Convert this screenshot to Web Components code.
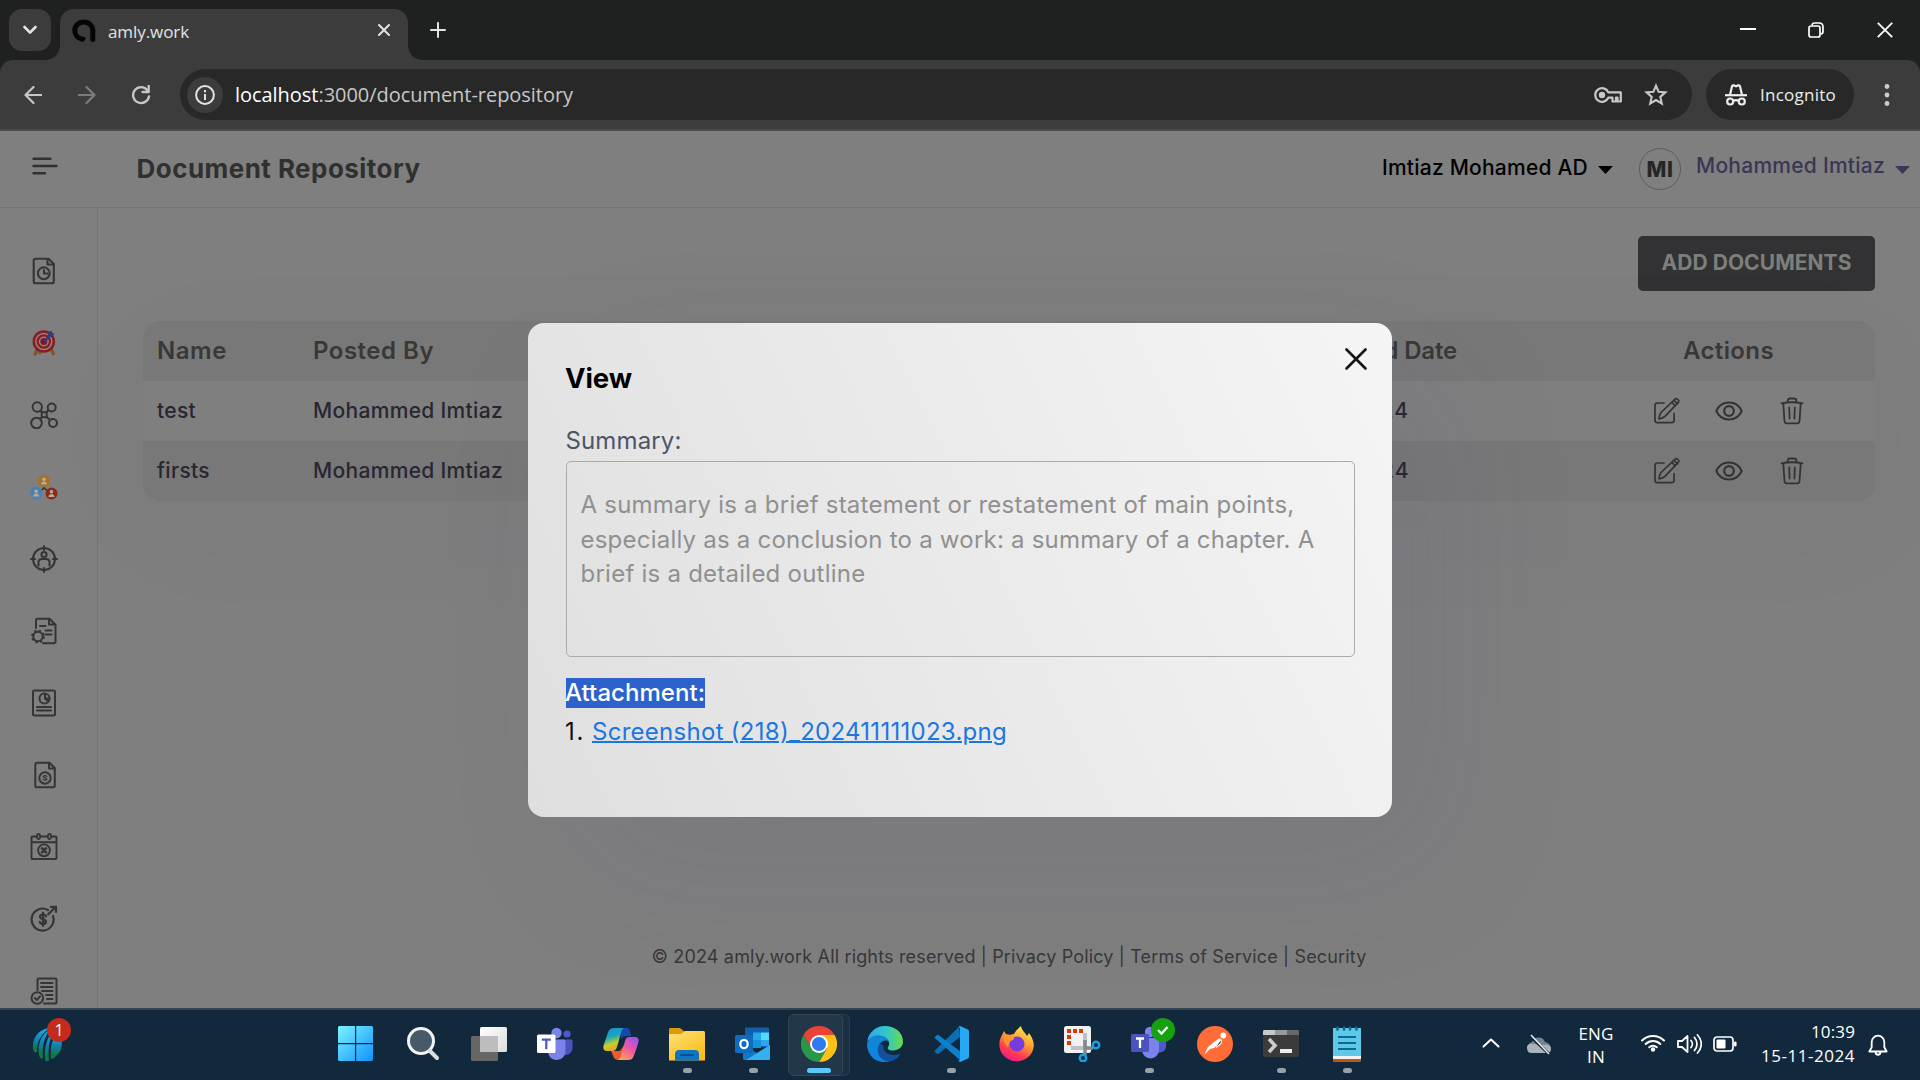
<!DOCTYPE html>
<html lang="en"><head><meta charset="utf-8"><title>amly.work</title>
<style>
html,body{margin:0;background:#7f7f7f;overflow:hidden}
body{width:1920px;height:1080px;font-family:Inter,"Liberation Sans",sans-serif}
</style></head><body>
<amly-desktop></amly-desktop>
<script>
const P='fill="none" stroke="currentColor" stroke-linecap="round" stroke-linejoin="round"';
const ICONS={
down:[14,10,`<path ${P} stroke-width="2.6" stroke-linecap="butt" d="M1.5 2l5.500 5.600L12.500 2"/>`],
logo:[24,24,`<path fill="none" stroke="#050505" stroke-width="5" stroke-linecap="round" d="M10.500 20.300C5.500 19.500 2.800 15.700 2.800 11.300 2.800 6.500 6.800 3 11.800 3S20.800 6.800 20.800 11.500V20.500"/><path stroke="#050505" stroke-width="2.500" fill="none" d="M10 19.300h3.500"/>`],
x:[12,12,`<path ${P} stroke-width="2" stroke-linecap="butt" d="M1 1l10 10M11 1L1 11"/>`],
plus:[16,16,`<path ${P} stroke-width="2" d="M8 1v14M1 8h14"/>`],
min:[16,16,`<path stroke="#fff" stroke-width="2" d="M0 7h16"/>`],
restore:[16,16,`<g fill="none" stroke="#fff" stroke-width="1.700"><rect x="1" y="4" width="11" height="11" rx="2"/><path d="M4 3C4.300 1.600 5.200 1 6.500 1H11c2.700 0 4 1.300 4 4v4.500c0 1.300-.6 2.200-2 2.500"/></g>`],
xb:[16,16,`<path stroke="#fff" stroke-width="1.800" d="M.8.8l14.400 14.400M15.200.8L.8 15.200"/>`],
back:[18,18,`<path ${P} stroke-width="2.200" stroke-linecap="butt" stroke-linejoin="miter" d="M18 9H2M9.500 1L1.500 9l8 8"/>`],
fwd:[18,18,`<path ${P} stroke-width="2.200" stroke-linecap="butt" stroke-linejoin="miter" d="M0 9h16M8.500 1l8 8-8 8"/>`],
reload:[20,20,`<path ${P} stroke-width="2.300" stroke-linecap="butt" d="M16.500 5.200A8 8 0 1 0 18 11.500"/><path ${P} stroke-width="2.300" stroke-linecap="butt" stroke-linejoin="miter" d="M17.700 .8V7H11.500"/>`],
info:[20,20,`<circle cx="10" cy="10" r="8.900" fill="none" stroke="#e3e3e3" stroke-width="2"/><path stroke="#e3e3e3" stroke-width="2" d="M10 9v6M10 5v2.200"/>`],
key:[28,16,`<path ${P} stroke-width="2.200" d="M14.300 5.300A6.800 6.800 0 1 0 14.300 10.700H18.500V14.500H22V10.700H23.500V14.500H26.800V5.300Z"/><circle cx="8" cy="8" r="3.200" fill="currentColor"/>`],
star:[24,24,`<path fill="none" stroke="currentColor" stroke-width="2.100" d="M12 2.600l2.600 6.200 6.800.6-5.100 4.500 1.500 6.600-5.800-3.500-5.800 3.500 1.500-6.600-5.100-4.500 6.800-.6z"/>`],
incog:[22,22,`<g fill="none" stroke="#eee" stroke-width="2.200"><path d="M0 11.200h22"/><path fill="none" d="M5 11L7 2.300c.2-.9.9-1.200 1.700-.9l1.300.5c.7.200 1.300.2 2 0l1.300-.5c.8-.3 1.500 0 1.700.9L17 11"/><circle cx="5.200" cy="17.500" r="3"/><circle cx="16.800" cy="17.500" r="3"/><path d="M8 16.900c2-1 4-1 6 0"/></g>`],
dots:[6,24,`<g fill="#ccc"><circle cx="3" cy="3.500" r="2.400"/><circle cx="3" cy="12" r="2.400"/><circle cx="3" cy="20.500" r="2.400"/></g>`],
menu:[26,18,`<path ${P} stroke-width="2.400" d="M1.500 1.700h17M1.500 9h23M1.500 16.300h11.500"/>`],
caret:[15,8,`<path fill="currentColor" d="M0 0h15L7.500 8z"/>`],
edit:[28,28,`<path ${P} stroke-width="1.700" d="M11 6H4.500C2.800 6 2 6.900 2 8.500V23.300C2 24.900 2.900 25.700 4.500 25.700H18.600c1.600 0 2.500-.8 2.500-2.400V16.500M6 21.800c.2-2.800.8-4.600 2-6.300L21.800 2.300c1.500-1.500 5.100.7 3.700 2.800L12.200 19.200C10.500 20.900 8.800 21.500 6 21.800zm15-18.500l3.500 3.500M19 5.500L22.300 9"/>`],
eye:[28,20,`<path ${P} stroke-width="2" d="M1.300 10C3.500 5 8 1.500 14 1.500S24.500 5 26.700 10C24.500 15 20 18.500 14 18.500S3.500 15 1.300 10z"/><circle cx="14" cy="10" r="4.800" ${P} stroke-width="2.200"/>`],
trash:[24,28,`<path ${P} stroke-width="1.800" d="M1.500 6.300c6-1.200 15-1.200 21 0M3.300 6.500l1.200 17.800c.1 1.300 1 2.100 2.300 2.100h10.400c1.300 0 2.200-.8 2.300-2.100L20.700 6.500M7.700 5.300V3.500C7.700 2.200 8.400 1.500 9.700 1.500h4.600c1.300 0 2 .7 2 2v1.800M9.200 10.500l.4 11M14.800 10.500l-.4 11"/>`],
close:[22,22,`<path ${P} stroke-width="2.600" d="M1.500 1.500l19 19M20.500 1.500l-19 19"/>`],
s1:[28,28,`<g ${P} stroke-width="2.100"><path d="M5.500 1.700h13l5.300 5.300V24.500c0 1-.8 1.800-1.800 1.800H5.500c-1 0-1.800-.8-1.800-1.800v-21c0-1 .8-1.800 1.800-1.800z"/><path d="M17.500 2v5.500h6M14 13.300v3.200h3.500"/><circle cx="13.800" cy="16.300" r="5.900"/></g>`],
s2:[28,28,`<path stroke="#7f5228" stroke-width="3" d="M8 18L4.700 26.500M20.500 18l3.300 8M10.500 20l-1 5"/><circle cx="13.800" cy="12.500" r="11.300" fill="#8b1b23"/><circle cx="13.800" cy="12.500" r="8" fill="none" stroke="#948080" stroke-width="1.500"/><circle cx="13.800" cy="12.500" r="4.300" fill="none" stroke="#948080" stroke-width="1.500"/><circle cx="13.800" cy="12.500" r="1.800" fill="#64101c"/><path stroke="#263f8c" stroke-width="2.500" d="M14 12.500l7-7"/><path fill="#263f8c" d="M18 7l1-4 3-1.500V4l2.500.5-2.500 3-4 1z"/>`],
s3:[28,28,`<g fill="none" stroke="currentColor" stroke-width="2"><circle cx="7.300" cy="6" r="4.700"/><circle cx="21.700" cy="6.500" r="4"/><circle cx="6.500" cy="22" r="5.300"/><circle cx="23" cy="22" r="4"/><rect x="11.700" y="11.200" width="5" height="5"/><path d="M10.500 9.500l2 2M18.500 9l-2.500 2.500M10 18l2.500-2.500M20 19l-3.500-3.200"/></g>`],
s4:[28,28,`<path fill="none" stroke="#333" stroke-width="1.500" d="M14 13v3M8 20l6-5 6 5"/><circle cx="14" cy="8" r="6.200" fill="#a57421"/><circle cx="6.200" cy="20" r="6.200" fill="#4d7fb0"/><circle cx="21.500" cy="20.500" r="6" fill="#8f2a16"/><g fill="#b7aaa0"><circle cx="14" cy="6.300" r="1.800"/><path d="M11 11.500c0-4 6-4 6 0z"/><circle cx="6.200" cy="18.300" r="1.800"/><path d="M3.200 23.500c0-4 6-4 6 0z"/><circle cx="21.500" cy="18.800" r="1.800"/><path d="M18.500 24c0-4 6-4 6 0z"/></g>`],
s5:[28,28,`<g ${P} stroke-width="2"><circle cx="14" cy="14" r="11"/><path d="M14 1v4M14 23v4M1 14h4M23 14h4M8.500 20.500v-3.300C8.500 15 9.700 14 12 14h4c2.300 0 3.500 1 3.500 3.200v3.300"/><circle cx="14" cy="9.500" r="2.600"/></g>`],
s6:[28,28,`<g ${P} stroke-width="2"><path d="M6 11V3.500c0-1 .7-1.700 1.700-1.700H19.500l6 6V24.500c0 1-.7 1.700-1.700 1.700H13M19 2v5.500h6M10 9h5.500M15.500 13.500h6M15.500 17.500h6"/><circle cx="8" cy="19.500" r="4.700"/></g><circle cx="8" cy="19.500" r="6" fill="none" stroke="currentColor" stroke-width="1.800" stroke-dasharray="2.360"/>`],
s7:[28,28,`<g ${P} stroke-width="2"><rect x="3" y="1.500" width="22" height="25" rx="1.500"/><path d="M7 18h14M7 21.500h14"/><circle cx="14.500" cy="9.500" r="5"/><path d="M15 4.800v4.700h4.500M15 9.500l3.300 3"/></g>`],
s8:[28,28,`<g ${P} stroke-width="2"><path d="M7 1.700h12.500l5.300 5.300V24.500c0 1-.7 1.700-1.700 1.700H7c-1 0-1.700-.7-1.700-1.700v-21C5.300 2.500 6 1.700 7 1.700zM19 2v5.500h5.500"/><circle cx="15" cy="17" r="5.700"/><path stroke-width="1.300" d="M16.800 15.300c-.8-1-3.600-.8-3.400.5.200 1.300 3.300.8 3.400 2.200.1 1.400-2.700 1.600-3.600.4"/></g>`],
s9:[28,28,`<g ${P} stroke-width="1.900"><rect x="1.500" y="3.500" width="25" height="22.500" rx="1"/><path d="M2 9.300h24"/><rect x="7" y="1" width="3" height="5" rx="1.500" fill="#7f7f7f"/><rect x="18" y="1" width="3" height="5" rx="1.500" fill="#7f7f7f"/><circle cx="14" cy="17.300" r="5.900"/><path stroke-width="2.500" d="M12 15.300l4 4M16 15.300l-4 4"/></g>`],
s10:[28,28,`<g ${P} stroke-width="2.200"><path d="M18 5A11 11 0 1 0 23 11"/><path stroke-linecap="butt" stroke-linejoin="miter" d="M17.500 10L25.500 2M20 1.800h6v6"/><path d="M16 11.500c-.7-3-6.500-2.500-6 .6.500 3 6 1.500 6 4.700 0 3-5.700 3-6.300 0M13 7.500v13.500"/></g>`],
s11:[28,28,`<g ${P} stroke-width="2"><path d="M7.500 13V2.500c0-.6.400-1 1-1h17c.6 0 1 .4 1 1V25.500c0 .6-.4 1-1 1H14M11 6h11.500M11 10h11.500M12 14h10.500M16 18h6.500M17 22h5.500"/><circle cx="7.300" cy="21" r="5.800"/><path d="M4.800 21l2 2 3.300-3.600"/></g>`],
claw:[32,36,`<defs><linearGradient id="g" x2="0" y2="1"><stop stop-color="#11b5ef"/><stop offset=".5" stop-color="#1480ad"/><stop offset=".8" stop-color="#0b7b4c"/></linearGradient></defs><g fill="url(#g)"><path d="M1 22C0 11 6 3 17 1 8 9 5 15 5 25 3 26 2 25 1 22z"/><path d="M7 28C5 17 9 8 19 1 12 11 10 18 11 31 9 32 8 31 7 28z"/><path d="M13 32C12 20 15 9 23 2 17 14 16 20 17 33 15 35 14 35 13 32z"/><path d="M19 31C18 20 20 11 26 6 32 12 31 24 24 29 21 32 20 33 19 31z"/></g>`],
win:[36,36,`<defs><linearGradient id="g" x2="1" y2="1"><stop stop-color="#7cf3ff"/><stop offset="1" stop-color="#0d93fb"/></linearGradient></defs><path fill="url(#g)" d="M0 1.500A1.500 1.500 0 0 1 1.500 0H17v17H0zM18.200 0h15.300A1.500 1.500 0 0 1 35 1.500V17H18.200zM0 18.200h17V35H1.500A1.500 1.500 0 0 1 0 33.500zM18.200 18.200H35v15.300a1.500 1.500 0 0 1-1.500 1.500H18.200z"/>`],
search:[36,36,`<circle cx="16" cy="15" r="12.500" fill="#475a69" stroke="#f3f3f3" stroke-width="3"/><path stroke="#ddd" stroke-width="4" stroke-linecap="round" d="M25 25l7 7"/>`],
task:[36,36,`<defs><linearGradient id="g" x2="1" y2="1"><stop stop-color="#fff"/><stop offset="1" stop-color="#ddd"/></linearGradient></defs><rect y="10" width="27" height="25" rx="1.500" fill="#666"/><rect x="9" y="1" width="27" height="25" rx="1.500" fill="url(#g)"/><path fill="#bdbdbd" d="M9 10h18v16H10.500A1.500 1.500 0 0 1 9 24.500z"/>`],
teams:[36,36,`<circle cx="30" cy="8" r="3.600" fill="#5059c9"/><path fill="#4b53bc" d="M24 13.500h10c1 0 1.500.6 1.500 1.500v7c0 4-3 7-7 7h-4.500z"/><circle cx="19.500" cy="7" r="5.200" fill="#7b83eb"/><path fill="#7b83eb" d="M12 13.500h14.500c1.200 0 2 .8 2 2V25c0 5-4 9-9 9s-8.500-4-8.500-9z"/><rect y="8.500" width="18.500" height="18.500" rx="1.500" fill="#fff"/><path fill="none" stroke="#5059c9" stroke-width="2.300" d="M4.800 13.700h9M9.300 13.700v9.500"/>`],
copilot:[36,36,`<defs><linearGradient id="g" x2=".3" y2="1"><stop stop-color="#1d8de8"/><stop offset=".45" stop-color="#19a7b9"/><stop offset=".75" stop-color="#c7cf2c"/><stop offset="1" stop-color="#e8a32a"/></linearGradient><linearGradient id="h" x1=".8" x2=".2" y2="1"><stop stop-color="#9b54ee"/><stop offset=".45" stop-color="#e956a5"/><stop offset="1" stop-color="#ffa35a"/></linearGradient></defs><path fill="#1747b5" d="M16 2h7c2.500 0 3.500 1.500 4 3.500l1.500 4.500h-6c-2 0-3 1-4 3z"/><path fill="#ec5b2d" d="M8 25h9l4-6-2 12c-.8 2.300-1.500 3-3.500 3-5 0-5-4-7.500-9z"/><path fill="url(#g)" d="M11 2h11c-2 0-3 1.500-3.600 3.500L14 21c-.8 2.800-2 4-4.500 4H4c-4 0-4-3.500-3.300-6L5 6.500C6.200 3.500 7.500 2 11 2z"/><path fill="url(#h)" d="M25 34H14c2 0 3-1.500 3.600-3.500L22 15c.8-2.800 2-4 4.500-4H32c4 0 4 3.500 3.300 6L31 29.500c-1.200 3-2.500 4.500-6 4.500z"/>`],
folder:[36,36,`<defs><linearGradient id="g" x2=".7" y2="1"><stop stop-color="#ffe07a"/><stop offset="1" stop-color="#fbbd16"/></linearGradient></defs><path fill="#dd9b0b" d="M0 3.500C0 2.700.700 2 1.500 2H11l5 4-4 6H0z"/><path fill="url(#g)" d="M0 8h12l4-3h18.500c.800 0 1.500.7 1.500 1.500v28H0z"/><path fill="#0f74c4" d="M6 34.500V28c0-2.500 1.500-4 4-4h16c2.500 0 4 1.500 4 4v6.500z"/><path stroke="#074c88" stroke-width="1.800" d="M11 29h14"/>`],
outlook:[36,36,`<path fill="#0f5fad" d="M10 2.500C10 2 10.500 1.500 11 1.500h22c.500 0 1 .5 1 1V21H10z"/><path fill="#28a8ea" d="M18 6.500h8V14h-8z"/><path fill="#50d9ff" d="M26 6.500h8V14h-8z"/><path fill="#1490df" d="M18 14h8v8h-8z"/><path fill="#28a8ea" d="M26 14h8v6h-8z"/><path fill="#1277c7" d="M8 19l14 8 13-8v13.500c0 .8-.7 1.500-1.500 1.500H9.500A1.500 1.500 0 0 1 8 32.500z"/><path fill="#35b0ee" d="M35 19L11 34h22.500c.8 0 1.500-.7 1.500-1.500z"/><rect y="9" width="18" height="18" rx="1.500" fill="#0f6cbd"/><ellipse cx="9" cy="18" rx="3.700" ry="4.200" fill="none" stroke="#fff" stroke-width="2.200"/>`],
chrome:[36,36,`<path fill="#ea4335" d="M18 9H33.590A18 18 0 0 0 2.410 9L10.200 22.500z"/><path fill="#fbc116" d="M33.590 9A18 18 0 0 1 18 36L25.800 22.500 18 9z"/><path fill="#279847" d="M18 36A18 18 0 0 1 2.410 9L10.200 22.500H25.800z"/><circle cx="18" cy="18" r="9" fill="#fff"/><circle cx="18" cy="18" r="7.100" fill="#3079ef"/>`],
edge:[36,36,`<defs><linearGradient id="g"><stop stop-color="#31a6ef"/><stop offset=".5" stop-color="#30c5d0"/><stop offset="1" stop-color="#65dc4b"/></linearGradient><linearGradient id="h" x2=".6" y2="1"><stop stop-color="#1387d3"/><stop offset="1" stop-color="#0d85df"/></linearGradient></defs><path fill="url(#g)" d="M.3 15C2 6 9 0 18 0c10.500 0 18 7 18 15.500C36 21 31.500 24.500 26 24.500c-4 0-6-1.500-5-3.500 1.500-2 1.500-4 .5-6C17 8 7 8 .3 15z"/><path fill="url(#h)" d="M0 18C1 12 6 9.500 11.500 9.500c5.500 0 9 2.500 10.300 6-3-2-7-1-9.300 3-3 6 1 15 10 17C10 38.500 0 30 0 18z"/><path fill="#11509c" d="M13 17.500c-5 6.500-1.500 15.500 7 18C26 36 32 32 33.500 27.500c-7 3-18 1.500-17-8z"/>`],
vscode:[36,36,`<path fill="#0b6fb8" d="M26 .8L2 24.500c-.6.600-.5 1 0 1.500l2 1.800c.5.500 1 .4 1.500 0L27 11z"/><path fill="#0d80cc" d="M2 10.700L4 9c.5-.4 1-.4 1.500 0L28 26v9L2 12.200c-.5-.5-.5-1 0-1.500z"/><path fill="#27a8f2" d="M26 .5c.5-.5 1.200-.5 1.800-.2l7 3.300c.8.400 1.200 1 1.200 1.900v25c0 .9-.4 1.500-1.200 1.900l-7 3.300c-.6.300-1.300.3-1.800-.2L25 34.500c1 .4 2 0 2-1.500V3c0-1.500-1-2-2-1.500z"/>`],
firefox:[36,36,`<defs><linearGradient id="g" x1=".8" x2=".3" y2="1"><stop stop-color="#fff14f"/><stop offset=".4" stop-color="#ffa531"/><stop offset=".75" stop-color="#ff3b4e"/><stop offset="1" stop-color="#ee1894"/></linearGradient></defs><path fill="url(#g)" d="M5 5c1.500 3 3 4 5 4l5-1C17 4 20 2 22 0c1 5 4 6 6 10l2-3c6 8 6 15 2 21-7 9-20 10-28 1C0 24-1 16 2.500 10z"/><circle cx="18" cy="18" r="7.500" fill="#743be0"/><path fill="#ff9530" d="M5 9c5-1 7 0 10 2 1 2-2 4-4 4 0 2-2 3-2 6C5 17 4 13 5 9z"/>`],
snip:[38,36,`<rect width="27" height="27" rx="2.500" fill="#f0f1f2"/><path fill="#bdc1c5" d="M7 20h12V7h4v17H7z"/><path fill="none" stroke="#d83b01" stroke-width="4" stroke-dasharray="4 2" d="M3 5h16"/><path fill="none" stroke="#d83b01" stroke-width="4" stroke-dasharray="4 2" d="M5 9v10"/><path stroke="#84898e" stroke-width="3.500" d="M21 14v15M20 22h9"/><g fill="none" stroke="#1b9de2" stroke-width="2.500"><circle cx="32" cy="19" r="3.200"/><circle cx="19" cy="32" r="3.200"/></g>`],
teams2:[46,44,`<circle cx="19" cy="14" r="5.200" fill="#7b83eb"/><path fill="#5059c9" d="M24 20h11v8.500a6 6 0 0 1-6 6h-5z"/><path fill="#7b83eb" d="M12 20h16v12a8.500 8.500 0 0 1-17 0z"/><rect y="16" width="18" height="18" rx="1.500" fill="#4b53bc"/><path fill="none" stroke="#fff" stroke-width="2.300" d="M5 20.500h8M9 20.500V30"/><circle cx="32" cy="12" r="12" fill="#16a10f"/><path fill="none" stroke="#fff" stroke-width="2.300" d="M27 12l3.500 3.500 6-6.500"/>`],
postman:[36,36,`<circle cx="18" cy="18" r="18" fill="#ff6c37"/><circle cx="26.300" cy="9.500" r="2.900" fill="#fff"/><path fill="#fff" d="M22.500 12l2.500 2.500-8 7.500-4 1-5.500 5.500 3-7 4-3.500z"/><path stroke="#fff" stroke-width="1.200" d="M24.500 13.500l-.5 4-5 4"/>`],
term:[36,36,`<rect y="4" width="36" height="27" rx="1.500" fill="#3b3b3b"/><path fill="#c8c8c8" d="M0 9V5.500C0 4.700.700 4 1.500 4H12v5z"/><path fill="#999" d="M12 4h12v5H12z"/><path fill="#686868" d="M24 4h10.500c.8 0 1.500.7 1.500 1.500V9H24z"/><path fill="none" stroke="#ccc" stroke-width="3.600" d="M6 13l6 6.500L6 26"/><rect x="17" y="23" width="12" height="4" fill="#eee"/>`],
note:[28,36,`<path fill="#60c8e7" d="M0 2h28v28H0z"/><path fill="#f2f2f2" d="M0 30h28v3H0z"/><path fill="#b8590f" d="M0 33h28v1.500c0 1-.5 1.500-1.500 1.500h-25C.5 36 0 35.500 0 34.500z"/><path stroke="#0c6894" stroke-width="2" d="M5 11h18M5 17h18M5 23h18"/><path stroke="#0c6894" stroke-width="2.600" stroke-linecap="round" d="M4.500 1.500v2M11 1.500v2M17 1.500v2M23.500 1.500v2"/>`],
up:[18,10,`<path ${P} stroke-width="2" d="M1.500 8.500L9 1.500l7.500 7"/>`],
cloud:[24,22,`<path fill="#738490" d="M5 8a7 7 0 0 1 13 0c4 1 6 4 6 6l-9-2-12 4C-1 13 1 9 5 8z"/><path fill="#a9b3bb" d="M0 13c0-2 3-4 6-3l12 1c3-1 6 1 6 4s-2 4-4 4H4c-3 0-4-3-4-6z"/><path stroke="#12283c" stroke-width="3" d="M2 1l20 19"/><path stroke="#eee" stroke-width="1.500" d="M4 1l18 19"/>`],
wifi:[24,18,`<g ${P} stroke-width="2"><path d="M1 6.500a15.500 15.500 0 0 1 22 0M4.700 10a10.300 10.300 0 0 1 14.600 0M8.300 13.300a5.200 5.200 0 0 1 7.400 0"/></g><circle cx="12" cy="15.500" r="2.200" fill="currentColor"/>`],
vol:[25,20,`<path ${P} stroke-width="1.800" d="M1 7h4l5.500-5v16L5 13H1zM14 6.500c1.800 2 1.800 5 0 7M17.500 3.500c3.300 3.800 3.300 9.200 0 13M20.500 1c5 5.500 5 12.500 0 18"/>`],
bat:[24,16,`<rect x="1" y="1" width="19" height="14" rx="3" fill="none" stroke="#fff" stroke-width="1.700"/><rect x="3.500" y="3.500" width="9" height="9" rx="1" fill="#fff"/><path stroke="#fff" stroke-width="2.500" stroke-linecap="round" d="M22.300 6.800v2.400"/>`],
bell:[20,24,`<path ${P} stroke-width="1.800" d="M1.300 18.500l2.400-4.200V9a6.300 6.300 0 0 1 12.600 0v5.300l2.400 4.200zM7.500 19.500c.5 3 4.500 3 5 0"/>`]
};
const def=(n,css,html)=>{const t=document.createElement('template');t.innerHTML=`<style>*{box-sizing:border-box}:host{display:block;box-sizing:border-box}${css}</style>${html}`;
customElements.define(n,class extends HTMLElement{connectedCallback(){if(this.shadowRoot)return;this.attachShadow({mode:'open'}).append(t.content.cloneNode(true))}})};

customElements.define('app-icon',class extends HTMLElement{connectedCallback(){if(this.shadowRoot)return;
 const [w,h,b]=ICONS[this.getAttribute('name')];
 this.attachShadow({mode:'open'}).innerHTML=`<style>:host{display:block;flex:none;width:${w}px;height:${h}px}svg{display:block}</style><svg width="${w}" height="${h}" viewBox="0 0 ${w} ${h}">${b}</svg>`}});

/* One line of text whose tracking is set so that it fills the width given in "w". */
customElements.define('fit-text',class extends HTMLElement{connectedCallback(){if(this.shadowRoot)return;
 this.attachShadow({mode:'open'}).innerHTML=`<style>:host{display:block;flex:none;white-space:nowrap}span{display:inline-block}:host([link]) span{text-decoration:underline;text-decoration-thickness:1.6px}</style><span><slot></slot></span>`;
 const s=this.shadowRoot.querySelector('span'),w=+this.getAttribute('w');
 requestAnimationFrame(()=>this.fit(s,w));this.fit(s,w)}
 fit(s,w){s.style.letterSpacing='0';const n=s.getBoundingClientRect().width;if(!n||!w)return;const c=this.textContent.length;s.style.letterSpacing=((w-n)/c).toFixed(3)+'px';}});

def('browser-tabs',`:host{height:60px;background:#1f2120;display:flex;align-items:flex-start;font-family:"Open Sans","Noto Sans",sans-serif;color:#e3e3e3}
.b{width:42px;height:42px;margin:9px 9px 0;border-radius:13px;background:#3c3c3c;display:grid;place-items:center}
.tab{position:relative;width:348px;height:51px;margin-top:9px;background:#3c3c3c;border-radius:14px 14px 0 0;display:flex;align-items:center;padding:0 18px 8px 12px}
.tab:before,.tab:after{content:"";position:absolute;bottom:0;width:14px;height:14px;background:radial-gradient(circle at 0 0,transparent 13.500px,#3c3c3c 14px)}
.tab:before{left:-14px}.tab:after{right:-14px;background:radial-gradient(circle at 100% 0,transparent 13.500px,#3c3c3c 14px)}
fit-text{font-size:17px;line-height:26px;margin:2px 0 0 12px}.tab app-icon:last-child{margin:-2px 0 0 auto}
.p{margin:22px 0 0 22px}.w{margin:22px 27px 0 auto;display:flex;gap:53px}`,
`<div class="b"><app-icon name="down"></app-icon></div><div class="tab"><app-icon name="logo"></app-icon><fit-text w="81">amly.work</fit-text><app-icon name="x"></app-icon></div><app-icon class="p" name="plus"></app-icon><div class="w"><app-icon name="min" style="margin-right:-1px"></app-icon><app-icon name="restore"></app-icon><app-icon name="xb"></app-icon></div>`);

def('browser-toolbar',`:host{height:71px;background:#1f2120;font-family:"Open Sans","Noto Sans",sans-serif;color:#c7c7c7}
.t{height:71px;background:#3c3c3c;border-radius:13px 13px 0 0;border-bottom:2px solid #494949;display:flex;align-items:center;padding-left:24px}
.url{width:1512px;height:51px;border-radius:26px;background:#282828;margin-left:29px;display:flex;align-items:center;padding:0 24px 0 7px}
.i{width:36px;height:36px;border-radius:50%;background:#3c3c3c;display:grid;place-items:center;margin-right:12px}
.url fit-text{font-size:20px;line-height:30px}.k{margin-left:auto}.s{margin-left:22px}
.inc{width:148px;height:51px;border-radius:26px;background:#282828;margin-left:14px;padding-left:19px;display:flex;align-items:center;gap:13px;color:#eee;font-size:17px}
.d{margin-left:30px}`,
`<div class="t"><app-icon name="back"></app-icon><app-icon name="fwd" style="margin-left:36px;color:#7b7b7b"></app-icon><app-icon name="reload" style="margin-left:35px"></app-icon><div class="url"><div class="i"><app-icon name="info"></app-icon></div><fit-text w="338"><span style="color:#fff">localhost</span>:3000/document-repository</fit-text><app-icon class="k" name="key"></app-icon><app-icon class="s" name="star"></app-icon></div><div class="inc"><app-icon name="incog"></app-icon><fit-text w="76">Incognito</fit-text></div><app-icon class="d" name="dots"></app-icon></div>`);

def('app-header',`:host{height:77px;flex:none;border-bottom:1px solid #737373;display:flex;align-items:flex-start;color:#303030}
.m{margin:26px 0 0 32px}.t{font-weight:650;font-size:26px;line-height:32px;margin:22px 0 0 78.500px}
.c{margin:24px 0 0 auto;color:#000;font-weight:500;font-size:21px;line-height:26px}
.av{width:42px;height:42px;border:1px solid #5c5c5c;border-radius:50%;margin:17px 0 0 26px;display:grid;place-items:center;font-weight:800;font-size:21px;color:#262626}
.n{margin:22px 0 0 15px;color:#3a3653;font-weight:500;font-size:21px;line-height:26px}`,
`<app-icon class="m" name="menu"></app-icon><fit-text class="t" w="284">Document Repository</fit-text><fit-text class="c" w="206">Imtiaz Mohamed AD</fit-text><app-icon name="caret" style="margin:35px 0 0 10px;color:#000"></app-icon><div class="av"><fit-text w="27">MI</fit-text></div><fit-text class="n" w="189">Mohammed Imtiaz</fit-text><app-icon name="caret" style="margin:35px 10px 0 10px;color:#3a3653"></app-icon>`);

def('side-nav',`:host{width:98px;flex:none;border-right:1px solid #737373;padding:49px 0 0 29.500px;display:flex;flex-direction:column;gap:44px;color:#353535;overflow:hidden}`,
[...Array(11)].map((_,i)=>`<app-icon name="s${i+1}"></app-icon>`).join(''));

def('doc-row',`:host{height:60px;display:grid;grid-template-columns:156px 975px 297px 1fr;align-items:center;padding:0 3px 0 14px;font-size:21px;font-weight:500;color:#282632}
:host([head]){font-size:24px;font-weight:600;color:#383838;background:#787878}:host([alt]){background:#787878}
::slotted(fit-text){margin-top:-2px}`,`<slot></slot>`);
def('row-actions',`:host{display:grid;grid-template-columns:repeat(3,63px);justify-content:center;justify-items:center;align-items:center;color:#333}`,`<app-icon name="edit" style="margin-left:2px"></app-icon><app-icon name="eye"></app-icon><app-icon name="trash"></app-icon>`);

def('doc-page',`:host{flex:1;display:flex;flex-direction:column;align-items:stretch;padding:28px 45px 0}
.add{align-self:flex-end;width:237px;height:55px;border-radius:5px;background:#323234;color:#7c807b;font-weight:700;font-size:21px;display:grid;place-items:center;padding-bottom:2px}
.w{margin-top:30px;border-radius:18px;box-shadow:0 30px 120px rgba(50,50,70,.04)}.tbl{border-radius:18px;overflow:hidden;background:#7f7f7f}
.f{margin:auto 0 39px;align-self:center;font-size:18px;line-height:25px;color:#383838}`,
`<div class="add"><fit-text w="190">ADD DOCUMENTS</fit-text></div>
<div class="w"><div class="tbl"><doc-row head><fit-text w="70">Name</fit-text><fit-text w="121">Posted By</fit-text><fit-text w="169">Uploaded Date</fit-text><fit-text w="91" style="justify-self:center">Actions</fit-text></doc-row>
<doc-row><fit-text w="39">test</fit-text><fit-text w="190">Mohammed Imtiaz</fit-text><fit-text w="121">12-11-2024</fit-text><row-actions></row-actions></doc-row>
<doc-row alt><fit-text w="53">firsts</fit-text><fit-text w="190">Mohammed Imtiaz</fit-text><fit-text w="121.500">12-11-2024</fit-text><row-actions></row-actions></doc-row></div></div>
<fit-text class="f" w="715">© 2024 amly.work All rights reserved | Privacy Policy | Terms of Service | Security</fit-text>`);

def('view-modal',`:host{position:absolute;left:528px;top:323px;width:864px;height:494px;border-radius:16px;background:linear-gradient(65deg,#dfdfdf,#f5f5f5);box-shadow:50px 50px 150px rgba(70,70,130,.09);padding:38px 37px 0 38px;color:#000}
.top{display:flex;align-items:flex-start;justify-content:space-between;height:57px;margin-left:-1px}
h2{margin:0;font-size:27.500px;font-weight:650;line-height:34px}.top app-icon{margin:-13px -12px 0 0;color:#151515}
.l{font-size:24px;line-height:30px;color:#4a5568;margin:8px 0 0 -.5px}
.box{height:196px;border:1px solid #aaa;border-radius:5px;margin-top:5px;padding:26px 13.500px;font-size:24px;line-height:34.600px;color:#909090}
.sel{display:inline-block;background:#2d62cc;color:#fff;font-weight:500;font-size:24px;line-height:30px;margin-top:21px}
.sel fit-text{margin-left:-1px}
.a{display:flex;gap:7px;font-size:24px;line-height:30px;margin:9px 0 0 -1px;color:#111}.a a{color:#1a76e2}`,
`<div class="top"><h2><fit-text w="67">View</fit-text></h2><app-icon name="close"></app-icon></div>
<fit-text class="l" w="116">Summary:</fit-text>
<div class="box"><fit-text w="714">A summary is a brief statement or restatement of main points,</fit-text><fit-text w="734">especially as a conclusion to a work: a summary of a chapter. A</fit-text><fit-text w="285">brief is a detailed outline</fit-text></div>
<div class="sel"><fit-text w="140">Attachment:</fit-text></div>
<div class="a"><fit-text w="20">1.</fit-text><a><fit-text link w="415">Screenshot (218)_202411111023.png</fit-text></a></div>`);

const apps=['win','search','task','teams','copilot','folder','outlook','chrome','edge','vscode','firefox','snip','teams2','postman','term','note'];
const run={folder:1,outlook:1,vscode:1,teams2:1,term:1,note:1};
def('task-bar',`:host{height:72px;background:#12283c;border-top:2px solid #33424f;display:flex;align-items:flex-start;color:#fff;font-family:"Open Sans","Noto Sans",sans-serif;font-size:17px;line-height:24px}
.wd{position:relative;margin:17px 0 0 32px;width:32px}.n{position:absolute;left:15px;top:-9px;width:24px;height:24px;border-radius:50%;background:#c42b1c;text-align:center;font-size:16px;line-height:24px}
.apps{display:flex;margin-left:260px}.app{position:relative;width:66px;height:70px;display:grid;place-items:center;padding-bottom:2px}
.app.win{padding-right:3px}.app.teams2{padding:0 0 10px 9px}
.app.run:after{content:"";position:absolute;left:28.500px;top:58px;width:9px;height:5px;border-radius:3px;background:#98a1aa}
.chrome{z-index:0}.chrome:before{content:"";position:absolute;left:2px;top:4px;width:53px;height:60px;border:1px solid #344655;border-radius:6px;background:#22374a;z-index:-1;box-shadow:7px 0 0 -1px #1a3043,7px 0 0 0 #2a3d4e}
.chrome:after{content:"";position:absolute;left:21px;top:58px;width:24px;height:5px;border-radius:3px;background:#5ac8fa}
.tray{margin-left:auto;display:flex;padding-right:32px}
.lang{display:flex;flex-direction:column;align-items:center;margin:12px 0 0 27px;width:36px;line-height:23px}
.clk{display:flex;flex-direction:column;align-items:flex-end;width:97px;margin:10px 0 0 21px}`,
`<div class="wd"><app-icon name="claw"></app-icon><div class="n">1</div></div><div class="apps">${apps.map(a=>`<div class="app ${a} ${run[a]?'run':''}"><app-icon name="${a}"></app-icon></div>`).join('')}</div>
<div class="tray"><app-icon name="up" style="margin-top:28px"></app-icon><app-icon name="cloud" style="margin:24px 0 0 27px"></app-icon><div class="lang"><fit-text w="35">ENG</fit-text><fit-text w="18">IN</fit-text></div><app-icon name="wifi" style="margin:24px 0 0 27px"></app-icon><app-icon name="vol" style="margin:24px 0 0 12px"></app-icon><app-icon name="bat" style="margin:26px 0 0 11px"></app-icon><div class="clk"><fit-text w="44">10:39</fit-text><fit-text w="94">15-11-2024</fit-text></div><app-icon name="bell" style="margin:23px 0 0 13px"></app-icon></div>`);

def('amly-desktop',`:host{width:1920px;height:1080px;display:flex;flex-direction:column;overflow:hidden;position:relative}
.page{position:relative;flex:1;min-height:0;display:flex;flex-direction:column;background:#7f7f7f;overflow:hidden}.r{flex:1;min-height:0;display:flex}
view-modal{margin-top:-131px}`,
`<browser-tabs></browser-tabs><browser-toolbar></browser-toolbar><div class="page"><app-header></app-header><div class="r"><side-nav></side-nav><doc-page></doc-page></div><view-modal></view-modal></div><task-bar></task-bar>`);
</script></body></html>
